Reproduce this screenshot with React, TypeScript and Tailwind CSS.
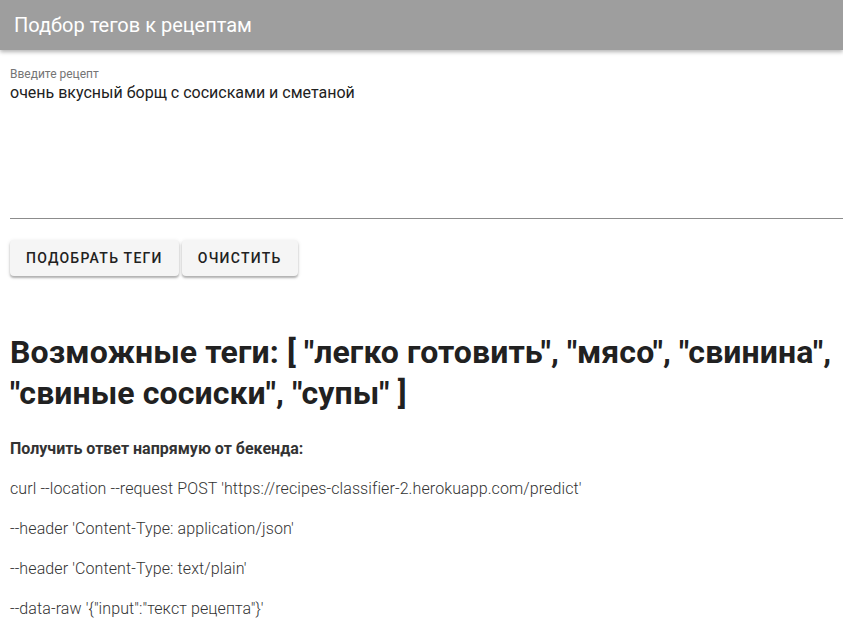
import React, { useState } from "react";

const tags = ["легко готовить", "мясо", "свинина", "свиные сосиски", "супы"];

export default function App() {
  const [recipe, setRecipe] = useState("очень вкусный борщ с сосисками и сметаной");

  return (
    <div className="min-h-screen bg-white font-['Roboto',sans-serif] text-[#212121]">
      <header className="flex h-[50px] items-center bg-[#9e9e9e] px-[14px] shadow-[0_2px_4px_rgba(0,0,0,0.3)]">
        <h1 className="text-[20px] font-normal text-white">Подбор тегов к рецептам</h1>
      </header>

      <main className="pl-[10px]">
        <div className="mt-[17px] flex flex-col border-b border-[#8c8c8c]">
          <label className="text-[12px] leading-[14px] text-[#757575]">Введите рецепт</label>
          <textarea
            className="h-[137px] resize-none pt-[2px] text-[16px] leading-[20px] text-[#212121] outline-none"
            value={recipe}
            onChange={(e) => setRecipe(e.target.value)}
          />
        </div>

        <div className="mt-[21px] flex gap-[3px]">
          <button className="h-[36px] rounded bg-[#f5f5f5] px-[16px] text-[14px] font-medium tracking-[0.09em] text-[#212121] shadow-[0_2px_2px_rgba(0,0,0,0.25),0_1px_4px_rgba(0,0,0,0.12)]">
            ПОДОБРАТЬ ТЕГИ
          </button>
          <button
            className="h-[36px] rounded bg-[#f5f5f5] px-[16px] text-[14px] font-medium tracking-[0.09em] text-[#212121] shadow-[0_2px_2px_rgba(0,0,0,0.25),0_1px_4px_rgba(0,0,0,0.12)]"
            onClick={() => setRecipe("")}
          >
            ОЧИСТИТЬ
          </button>
        </div>

        <h2 className="mt-[56px] text-[32px] font-bold leading-[41px] tracking-[0.1px] text-[#212121]">
          Возможные теги: [ {tags.map((t) => `"${t}"`).join(", ")} ]
        </h2>

        <div className="mt-[23px] text-[16px] leading-[24px] text-[#333]">
          <p className="font-bold">Получить ответ напрямую от бекенда:</p>
          <p className="mt-[16px] font-light tracking-[0.1px]">
            curl --location --request POST 'https://recipes-classifier-2.herokuapp.com/predict'
          </p>
          <p className="mt-[16px] font-light tracking-[0.1px]">--header 'Content-Type: application/json'</p>
          <p className="mt-[16px] font-light tracking-[0.1px]">--header 'Content-Type: text/plain'</p>
          <p className="mt-[16px] font-light tracking-[0.1px]">{`--data-raw '{"input":"текст рецепта"}'`}</p>
        </div>
      </main>
    </div>
  );
}
